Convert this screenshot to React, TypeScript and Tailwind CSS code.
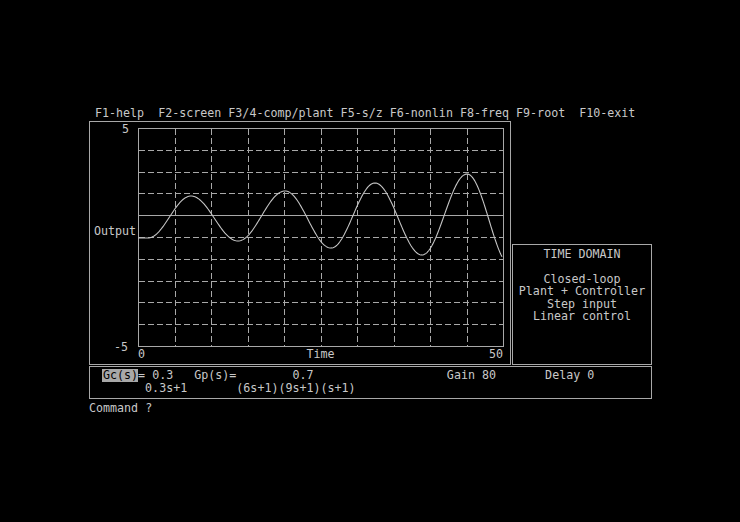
import React from 'react';

// extrema of the step response, in screen pixels (x, y)
const extrema: [number, number][] = [
  [148, 238], [191, 196], [238, 241], [285, 191], [331, 248],
  [375, 183], [422, 255], [467, 174], [511, 266],
];

const PLOT_X = 138;
const PLOT_Y = 128;
const PLOT_W = 366;
const PLOT_H = 219;

function buildCurve() {
  let d = `M0,${extrema[0][1] - PLOT_Y}`;
  for (let k = 0; k < extrema.length - 1; k++) {
    const [x0, y0] = extrema[k];
    const [x1, y1] = extrema[k + 1];
    for (let x = x0; x <= x1 && x <= PLOT_X + PLOT_W - 2; x++) {
      const f = (x - x0) / (x1 - x0);
      const y = y0 + ((y1 - y0) * (1 - Math.cos(Math.PI * f))) / 2;
      d += ` L${x - PLOT_X},${(y - PLOT_Y).toFixed(2)}`;
    }
  }
  return d;
}

const vLines = [1, 2, 3, 4, 5, 6, 7, 8, 9].map((i) => Math.round(i * 36.5) + 0.5);
const hLines = [1, 2, 3, 4, 5, 6, 7, 8, 9].map((i) => ({ y: Math.round(i * 21.8) + 0.5, solid: i === 4 }));

function Plot() {
  const line = '#a8a8a8';
  return (
    <svg width={PLOT_W} height={PLOT_H} className="block">
      <rect x={0.5} y={0.5} width={PLOT_W - 1} height={PLOT_H - 1} fill="none" stroke={line} />
      {vLines.map((x) => (
        <line key={x} x1={x} y1={1} x2={x} y2={PLOT_H - 1} stroke={line} strokeDasharray="6 3" />
      ))}
      {hLines.map((h) => (
        <line
          key={h.y}
          x1={1}
          y1={h.y}
          x2={PLOT_W - 1}
          y2={h.y}
          stroke={line}
          strokeDasharray={h.solid ? undefined : '6 3'}
        />
      ))}
      <path d={buildCurve()} fill="none" stroke="#c4c4c4" strokeWidth={1.1} />
    </svg>
  );
}

export default function App() {
  return (
    <div className="w-[740px] h-[522px] bg-black pl-[89px] pt-[106px] font-['DejaVu_Sans_Mono',monospace] text-[11.67px] text-[#c8c8c8] whitespace-pre">
      <div className="pl-[6px] leading-[14px]">
        F1-help  F2-screen F3/4-comp/plant F5-s/z F6-nonlin F8-freq F9-root  F10-exit
      </div>

      <div className="mt-[1px] flex items-end">
        <div className="w-[422px] h-[244px] border border-[#a8a8a8] pt-[6px]">
          <div className="flex">
            <div className="relative w-[48px] h-[219px] leading-[14px]">
              <span className="absolute right-[9px] top-[-6px]">5</span>
              <span className="absolute left-[4px] top-[96px]">Output</span>
              <span className="absolute right-[10px] top-[212px]">-5</span>
            </div>
            <Plot />
          </div>
          <div className="ml-[48px] w-[365px] grid grid-cols-3 leading-[14px]">
            <span className="text-left">0</span>
            <span className="text-center">Time</span>
            <span className="text-right">50</span>
          </div>
        </div>

        <div className="ml-[1px] w-[140px] h-[121px] border border-[#a8a8a8] pt-[3px] text-center leading-[12.4px]">
          <div>TIME DOMAIN</div>
          <div>&nbsp;</div>
          <div>Closed-loop</div>
          <div>Plant + Controller</div>
          <div>Step input</div>
          <div>Linear control</div>
        </div>
      </div>

      <div className="mt-[1px] w-[563px] h-[33px] border border-[#a8a8a8] pt-[2px] pl-[12px] leading-[13px]">
        <div>
          <span className="inline-block pl-[1px] bg-[#a8a8a8] text-black">Gc(s)</span>
          {'= 0.3   Gp(s)=        0.7                   Gain 80       Delay 0'}
        </div>
        <div className="pl-[1px]">{'      0.3s+1       (6s+1)(9s+1)(s+1)'}</div>
      </div>

      <div className="mt-[2px] leading-[14px]">Command ?</div>
    </div>
  );
}
